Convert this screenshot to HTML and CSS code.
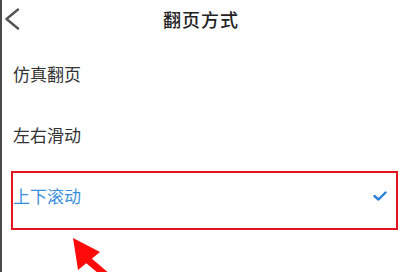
FILE: index.html
```html
<!DOCTYPE html>
<html lang="zh-CN">
<head>
    <meta charset="UTF-8">
    <meta name="viewport" content="width=device-width, initial-scale=1.0">
    <title>翻页方式</title>
    <link rel="stylesheet" href="styles.css">
</head>
<body>
    <div class="page">
        <div class="header">
            <div class="back">
                <svg width="16" height="22" viewBox="0 0 16 22">
                    <polyline points="14,1.5 2.5,11 14,20.5" fill="none" stroke="#555" stroke-width="2.4" stroke-linecap="round" stroke-linejoin="round"/>
                </svg>
            </div>
            <div class="title">翻页方式</div>
            <div class="spacer"></div>
        </div>

        <div class="list">
            <div class="item">仿真翻页</div>
            <div class="item">左右滑动</div>
            <div class="item selected">
                <span>上下滚动</span>
                <svg class="check" width="14" height="10" viewBox="0 0 14 10">
                    <polyline points="1.5,5 5.5,8.5 12.5,1.5" fill="none" stroke="#2a7fd6" stroke-width="2.4" stroke-linecap="round" stroke-linejoin="round"/>
                </svg>
            </div>
        </div>

        <!-- annotation over the screenshot -->
        <div class="mark-box"></div>
        <svg class="mark-arrow" width="60" height="50" viewBox="0 0 60 50">
            <polygon points="13,13 40,27 18,45" fill="#ff0a0a"/>
            <line x1="28" y1="35" x2="48" y2="52" stroke="#ff0a0a" stroke-width="7"/>
        </svg>
    </div>
</body>
</html>
```

FILE: styles.css
```css
body {
    margin: 0;
    font-family: "Noto Sans CJK SC", "Noto Sans", sans-serif;
    background: #fff;
}
.page {
    position: relative;
    width: 398px;
    height: 272px;
    border-left: 2px solid #4a4a4a;
    overflow: hidden;
}
.header {
    display: grid;
    grid-template-columns: 40px 1fr 40px;
    align-items: center;
    height: 37px;
}
.back {
    display: flex;
    align-items: center;
    padding-left: 2px;
    padding-top: 1px;
}
.title {
    text-align: center;
    font-size: 18px;
    font-weight: 500;
    color: #222;
    letter-spacing: 1px;
}
.item {
    display: flex;
    align-items: center;
    justify-content: space-between;
    height: 61px;
    padding: 0 13px 0 11px;
    font-size: 17px;
    color: #333;
}
.item:first-child {
    margin-top: 6px;
}
.selected {
    color: #3b8fdb;
}
.mark-box {
    position: absolute;
    left: 9px;
    top: 171px;
    width: 383px;
    height: 55px;
    border: 2px solid #e3141e;
}
.mark-arrow {
    position: absolute;
    left: 58px;
    top: 225px;
}
```
